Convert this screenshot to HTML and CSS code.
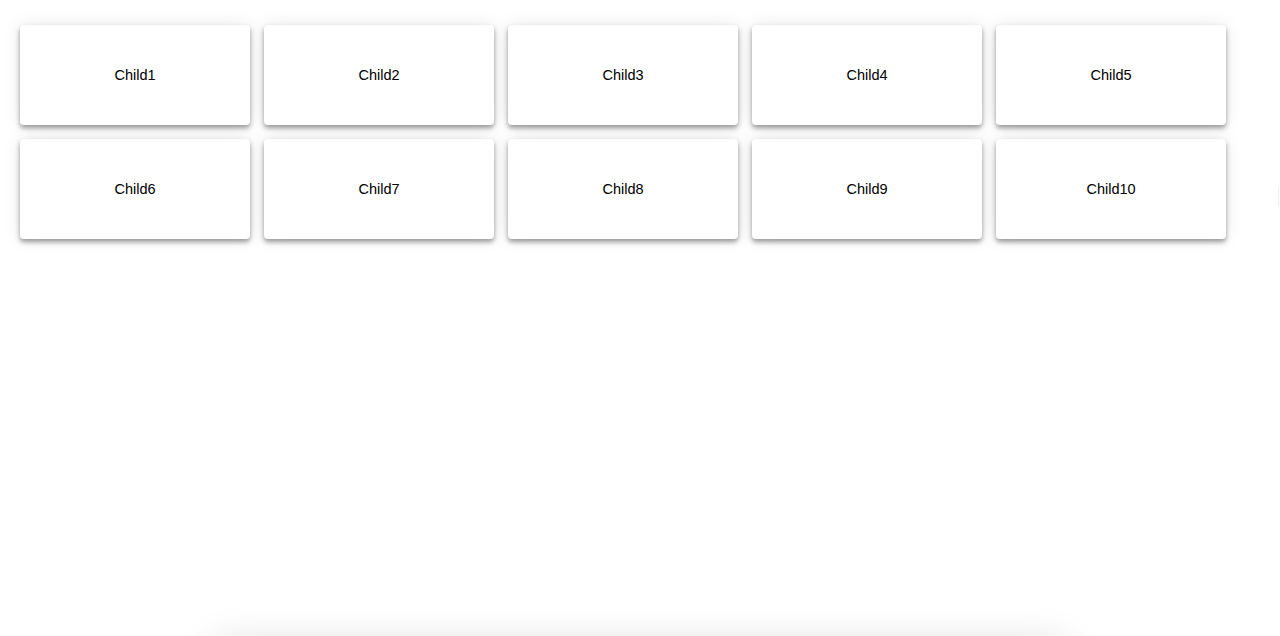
FILE: index.html
```html
<!DOCTYPE html>
<html>
<head>
<meta charset="utf-8">
<link rel="stylesheet" href="styles.css">
</head>
<body>
<div class="grid">
  <div class="card">Child1</div>
  <div class="card">Child2</div>
  <div class="card">Child3</div>
  <div class="card">Child4</div>
  <div class="card">Child5</div>
  <div class="card">Child6</div>
  <div class="card">Child7</div>
  <div class="card">Child8</div>
  <div class="card">Child9</div>
  <div class="card">Child10</div>
</div>
<div class="edge-mark"></div>
<div class="panel"></div>
</body>
</html>
```
FILE: styles.css
```css
html, body {
  margin: 0;
  padding: 0;
  background: #fff;
  overflow: hidden;
}
body {
  position: relative;
  height: 636px;
  font-family: "Liberation Sans", Arial, sans-serif;
  color: #000;
}
.grid {
  display: flex;
  flex-wrap: wrap;
  gap: 14px;
  padding: 25px 20px 0 20px;
  width: 1206px;
}
.card {
  width: 230px;
  height: 100px;
  background: #fff;
  border-radius: 4px;
  display: flex;
  align-items: center;
  justify-content: center;
  font-size: 14.5px;
  box-shadow: 0 0 18px rgba(0,0,0,0.09), 0 3px 5px rgba(0,0,0,0.38);
}
.edge-mark {
  position: absolute;
  left: 1278px;
  top: 188px;
  width: 1px;
  height: 18px;
  background: #efefef;
}
.panel {
  width: 850px;
  height: 40px;
  margin: 405px auto 0;
  background: #fff;
  box-shadow: 0 0 40px rgba(0,0,0,0.14);
}
```
